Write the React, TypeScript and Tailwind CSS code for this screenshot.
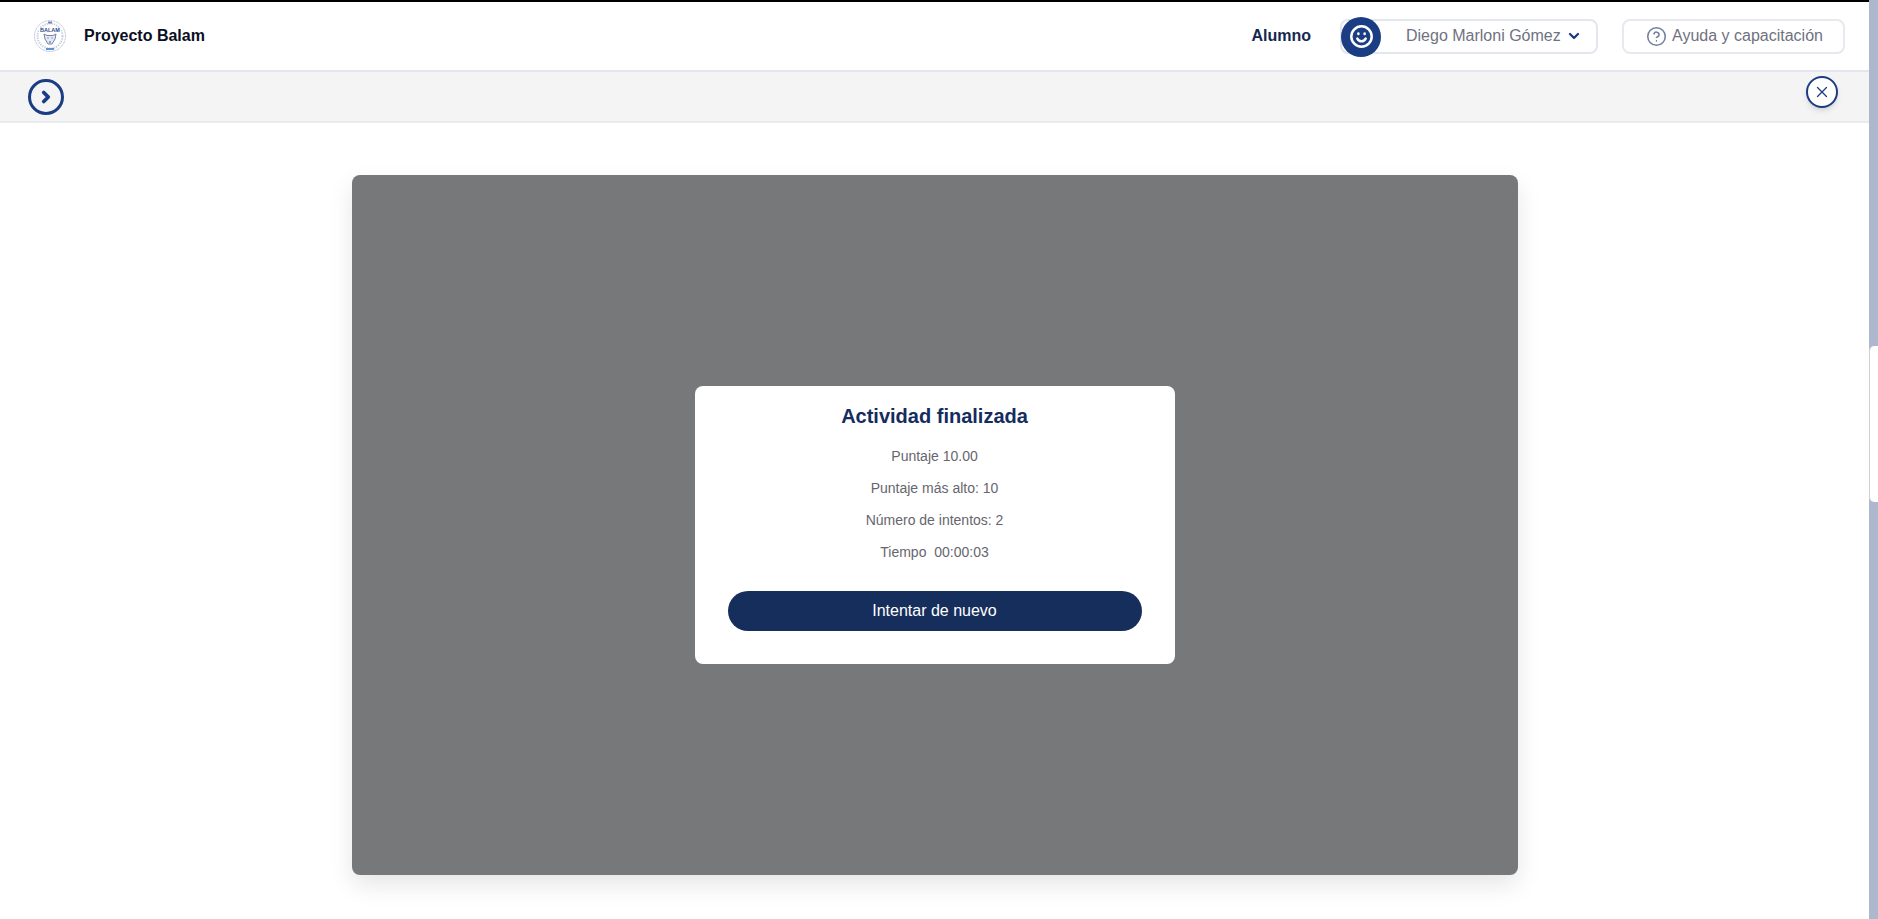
import { ChevronDown, ChevronRight, CircleHelp, X } from 'lucide-react';

function BalamLogo() {
  return (
    <svg viewBox="0 0 34 34" className="size-[34px]" aria-hidden="true">
      <circle cx="17" cy="17" r="15.5" fill="none" stroke="#aab6d0" strokeWidth="1" strokeDasharray="1 0.6" />
      <circle cx="17" cy="17" r="12.5" fill="none" stroke="#c6cfe1" strokeWidth="2" strokeDasharray="1.4 1" />
      <rect x="6" y="9" width="22" height="5" fill="#fff" />
      <text x="17" y="13.4" textAnchor="middle" fontSize="5.5" fontWeight="700" fill="#2f4a8a" fontFamily="'Liberation Sans', sans-serif">
        BALAM
      </text>
      <path d="M11 15l3 1.5h6l3-1.5-1 5-3 5h-4l-3-5z" fill="#e6eaf3" stroke="#6f82ad" strokeWidth="1" />
      <path d="M14.5 19h1M18.5 19h1M16 23h2" stroke="#3f5891" strokeWidth="1" />
      <path d="M15 2.5h4v2h-4z" fill="#6f82ad" />
      <rect x="13" y="29" width="8" height="2" fill="#5b93d3" />
    </svg>
  );
}

function SmileIcon() {
  return (
    <svg viewBox="0 0 24 24" className="size-[25px]" fill="none" stroke="#fff" strokeWidth="2.4" strokeLinecap="round" aria-hidden="true">
      <circle cx="12" cy="12" r="9.8" />
      <path d="M8 14c1 1.8 2.4 2.6 4 2.6s3-.8 4-2.6" />
      <path d="M9 9v.6M15 9v.6" strokeWidth="2.4" />
    </svg>
  );
}

function Header() {
  return (
    <header className="flex h-[68px] shrink-0 items-center justify-between bg-white pl-[33px] pr-[24px]">
      <div className="flex items-center gap-[17px]">
        <BalamLogo />
        <span className="text-base font-bold text-[#0c0f24]">Proyecto Balam</span>
      </div>
      <div className="flex items-center">
        <span className="mr-[29px] text-base font-bold text-[#14284f]">Alumno</span>
        <div className="relative mr-[24px] flex h-[35px] w-[258px] items-center rounded-lg border-2 border-[#e4e6ee] pl-[64px]">
          <div className="absolute -left-[1px] -top-[4px] flex size-10 items-center justify-center rounded-full bg-[#1b3d83]">
            <SmileIcon />
          </div>
          <span className="text-base text-[#6f7280]">Diego Marloni Gómez</span>
          <ChevronDown className="ml-[5px] size-[16px] text-[#1b3d83]" strokeWidth={3.5} />
        </div>
        <div className="flex h-[35px] w-[223px] items-center justify-center gap-[5px] rounded-lg border-2 border-[#e8e9ef] pl-[2px]">
          <CircleHelp className="size-[21px] text-[#6f7f9c]" strokeWidth={1.75} />
          <span className="text-base text-[#6f7280]">Ayuda y capacitación</span>
        </div>
      </div>
    </header>
  );
}

function ResultModal() {
  const rows = ['Puntaje 10.00', 'Puntaje más alto: 10', 'Número de intentos: 2', 'Tiempo\u00a0 00:00:03'];
  return (
    <div className="flex h-[278px] w-[480px] flex-col items-center rounded-lg bg-white px-[33px] pt-[17px]">
      <h2 className="text-xl leading-[27px] font-bold text-[#142c5e]">Actividad finalizada</h2>
      <div className="mt-[16px] flex flex-col gap-[12px]">
        {rows.map((row) => (
          <p key={row} className="text-center text-sm leading-5 text-[#66666e]">
            {row}
          </p>
        ))}
      </div>
      <button className="mt-[29px] h-10 w-full rounded-full bg-[#162e5c] text-base text-white">
        Intentar de nuevo
      </button>
    </div>
  );
}

export default function App() {
  return (
    <div className="flex h-screen overflow-hidden bg-white font-['Liberation_Sans',Arial,sans-serif]">
      <div className="relative flex min-w-0 flex-1 flex-col">
        <div className="h-[2px] shrink-0 bg-black" />
        <Header />
        <div className="flex h-[53px] shrink-0 items-center border-y-2 border-t-[#e4e6ee] border-b-[#ebebed] bg-[#f4f4f5] pl-[28px]">
          <div className="flex size-9 items-center justify-center rounded-full border-[3px] border-[#1b3d83]">
            <ChevronRight className="size-[18px] text-[#1b3d83]" strokeWidth={5} />
          </div>
        </div>
        <button className="absolute left-[1806px] top-[76px] flex size-8 items-center justify-center rounded-full border-2 border-[#1b3d83] bg-white shadow-md">
          <X className="size-[18px] text-[#1b3d83]" strokeWidth={1.75} />
        </button>
        <main className="flex flex-1 justify-center pt-[52px]">
          <div className="flex h-[700px] w-[1166px] items-center justify-center rounded-lg bg-[#77787a] shadow-[0_10px_24px_rgba(0,0,0,0.1)]">
            <ResultModal />
          </div>
        </main>
      </div>
      <div className="w-[9px] shrink-0 bg-[#adb7ce] pt-[346px]">
        <div className="h-[156px] rounded-l-[5px] border-l border-[#cfcfd2] bg-white" />
      </div>
    </div>
  );
}
